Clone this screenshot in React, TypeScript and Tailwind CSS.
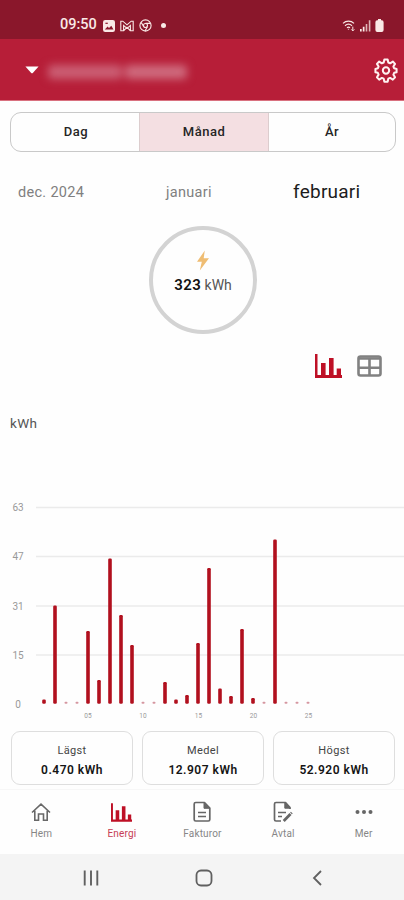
import React from "react";

const barTops: number[] = [
  700, 606, 0, 0, 631.5, 680.5, 559, 615.5, 645.5, 0, 0, 682.5, 700, 695.5, 643.5,
  568.5, 689, 696.5, 629.5, 698.5, 0, 540, 0, 0, 0,
];

const gridLines = [
  { label: "63", y: 507.5 },
  { label: "47", y: 556.5 },
  { label: "31", y: 606 },
  { label: "15", y: 655 },
];

const dayLabels = [
  { label: "05", x: 88 },
  { label: "10", x: 143 },
  { label: "15", x: 198.5 },
  { label: "20", x: 253.5 },
  { label: "25", x: 308.5 },
];

function StatusBar() {
  return (
    <div className="flex h-[39px] shrink-0 items-center bg-[#8a172b] pt-[12px] pl-[60px] pr-[20px] text-[#f9e9e6]">
      <span className="w-[38px] text-[14.5px] font-medium leading-none">09:50</span>
      <svg className="ml-[5px]" width="12" height="12" viewBox="0 0 12 12">
        <rect width="12" height="12" rx="2.2" fill="currentColor" />
        <path d="M1.8 9.6 4.6 6.6l1.4 1.3 2.3-2.2 2.2 3.9z" fill="#8a172b" />
        <path d="M2.4 3.3h2.4" stroke="#8a172b" strokeWidth="1.2" />
      </svg>
      <svg className="ml-[5px]" width="14" height="12" viewBox="0 0 14 12" fill="none" stroke="currentColor" strokeWidth="1.1">
        <path d="M.8 1.2v9.6h2.8V5.5L7 8.4l3.4-2.9v5.3h2.8V1.2h-2L7 4.8 2.8 1.2zM3.6 10.8 7 7.2l3.4 3.6" />
      </svg>
      <svg className="ml-[5px]" width="13" height="13" viewBox="0 0 13 13" fill="none" stroke="currentColor" strokeWidth="1.1">
        <circle cx="6.5" cy="6.5" r="5.6" />
        <circle cx="6.5" cy="6.5" r="2" />
        <path d="M6.5 4.4h4.8M4.6 7.5 2.2 3.4M8.3 7.7 6 11.9" />
      </svg>
      <span className="ml-[9px] size-[5px] rounded-full bg-current" />
      <div className="ml-auto flex items-center">
        <svg width="14" height="13" viewBox="0 0 14 13" fill="none" stroke="currentColor" strokeWidth="1.2">
          <path d="M1 4.4a8 8 0 0 1 11 0M3 6.7a5.3 5.3 0 0 1 7 0M5 8.8a2.4 2.4 0 0 1 3 0" />
          <path d="M6.5 9.8v.8" />
          <path d="M10.8 7.6v4.2M9.3 10.4l1.5 1.5 1.5-1.5" strokeWidth="1" />
        </svg>
        <svg className="ml-[3px]" width="13" height="13" viewBox="0 0 13 13" fill="currentColor">
          <path d="M1 10h1.7v2.5H1zM3.8 7.8h1.7v4.7H3.8z" />
          <path d="M6.7 5h1.6v7.5H6.7zM9.8 1.2h1.6v11.3H9.8z" opacity=".75" />
        </svg>
        <svg className="ml-[3px]" width="9" height="13" viewBox="0 0 9 13" fill="currentColor">
          <path d="M3 0h3v1.3h.8A1.9 1.9 0 0 1 8.6 3.2v7.9A1.9 1.9 0 0 1 6.7 13H2.3A1.9 1.9 0 0 1 .4 11.1V3.2a1.9 1.9 0 0 1 1.8-1.9H3z" />
        </svg>
      </div>
    </div>
  );
}

function Header() {
  return (
    <header className="flex h-[62px] shrink-0 items-center border-b border-[#d9717f] bg-[#b71e38] pl-[25px] pr-[6px]">
      <svg className="mt-[1px]" width="14" height="8" viewBox="0 0 14 8" fill="white">
        <path d="M.4.4h13.2L8 6.8q-1 1-2 0z" />
      </svg>
      <div className="ml-[9px] mt-[4px] flex gap-[3px] blur-[4px]">
        <span className="h-[14px] w-[74px] rounded bg-[#cb5f74]" />
        <span className="h-[14px] w-[62px] rounded bg-[#cf6b7e]" />
      </div>
      <svg className="ml-auto mt-[1px]" width="24" height="25" viewBox="0 0 24 26" fill="none" stroke="#fff2f1" strokeWidth="2.1" strokeLinejoin="round">
        <path d="M10.3 1.5h3.4l.7 3.2 1.9.8 2.8-1.8 2.3 2.4-1.7 2.8.8 1.8 2.5.7v3.4l-2.5.6-.8 1.9 1.7 2.8-2.3 2.4-2.8-1.8-1.9.8-.7 3.1h-3.4l-.7-3.1-1.9-.8-2.8 1.8-2.3-2.4 1.7-2.8-.8-1.9L1 14.8v-3.4l2.5-.7.8-1.8-1.7-2.8 2.3-2.4 2.8 1.8 1.9-.8z" />
        <circle cx="12" cy="13" r="3.3" />
      </svg>
    </header>
  );
}

function BarsIcon({ className }: { className?: string }) {
  return (
    <svg className={className} viewBox="0 0 27 24" fill="#be1026">
      <path d="M0 0h2.5v21H27v3H0z" />
      <path d="M6 9h4.6v13H6zM14 4h4.6v18H14zM21.7 14.5H26V22h-4.3z" />
    </svg>
  );
}

function Chart() {
  return (
    <svg className="block shrink-0" width="404" height="236" viewBox="0 490 404 236">
      {gridLines.map((g) => (
        <g key={g.label}>
          <path d={`M36 ${g.y}H404`} stroke="#ebebeb" strokeWidth="1.4" />
          <text x="18" y={g.y + 3.7} textAnchor="middle" fontSize="10" fill="#999">{g.label}</text>
        </g>
      ))}
      <text x="18" y="708" textAnchor="middle" fontSize="10" fill="#999">0</text>
      {barTops.map((top, i) => {
        const x = 44 + i * 11;
        return top === 0 ? (
          <rect key={i} x={x - 1.5} y="701.8" width="3" height="2" rx="1" fill="#d596a0" />
        ) : (
          <rect key={i} x={x - 1.8} y={top - 0.5} width="3.6" height={704.2 - top} rx="1.2" fill="#b1101e" />
        );
      })}
      {dayLabels.map((d) => (
        <text key={d.label} x={d.x} y="717.5" textAnchor="middle" fontSize="6.5" fill="#999">{d.label}</text>
      ))}
    </svg>
  );
}

function Stat({ label, value }: { label: string; value: string }) {
  return (
    <div className="flex h-[54px] flex-1 flex-col items-center rounded-[9px] border border-[#dedede] pt-[11px]">
      <span className="text-[11px] leading-[15px] tracking-[0.35px] text-[#444]">{label}</span>
      <span className="mt-[5px] text-[12px] font-semibold leading-[15px] tracking-[0.5px] text-[#151515]">{value}</span>
    </div>
  );
}

function DocIcon({ edit }: { edit?: boolean }) {
  return (
    <svg width="20" height="22" viewBox="0 0 20 22" fill="none" stroke="#666" strokeWidth="1.7" strokeLinejoin="round">
      {edit ? (
        <>
          <path d="M17 8V6.5L12.5 1.5H3q-1.5 0-1.5 1.5v15.5Q1.5 20 3 20h5" />
          <path d="M11.8 1.5v5.7H17z" fill="#666" strokeWidth="1" />
          <path d="M5 11.5h8M5 15.5h4" />
          <path d="m10.7 20 6.8-7" strokeWidth="2.8" />
          <path d="m18 12.4.8-.8" strokeWidth="2.6" />
        </>
      ) : (
        <>
          <path d="M12.5 1.5H3.7q-1.5 0-1.5 1.5v15.5Q2.2 20 3.7 20h12.6q1.5 0 1.5-1.5V7z" />
          <path d="M12 1.5v5.8h5.5z" fill="#666" strokeWidth="1" />
          <path d="M6 11.5h8M6 15.5h8" />
        </>
      )}
    </svg>
  );
}

function Tab({ label, active, children }: { label: string; active?: boolean; children: React.ReactNode }) {
  return (
    <div className="flex flex-1 flex-col items-center">
      <div className="flex h-[22px] items-center">{children}</div>
      <span className={`mt-[4px] text-[10px] leading-[14px] tracking-[0.15px] ${active ? "text-[#c63d55]" : "text-[#868686]"}`}>{label}</span>
    </div>
  );
}

export default function App() {
  return (
    <div className="flex h-[900px] w-[404px] flex-col overflow-hidden bg-[#fefefe] font-['Roboto',sans-serif]">
      <StatusBar />
      <Header />
      <div className="ml-[10px] mt-[11px] flex h-[40px] w-[386px] shrink-0 overflow-hidden rounded-[11px] border border-[#c9c9c9] text-[13px] font-medium tracking-[0.5px] text-[#252525]">
        <div className="flex w-[128px] items-center justify-center pl-[2px]">Dag</div>
        <div className="flex w-[130px] items-center justify-center border-x border-[#dccdce] bg-[#f4dfe2]">Månad</div>
        <div className="flex flex-1 items-center justify-center">År</div>
      </div>
      <div className="mt-[24px] flex h-[32px] shrink-0 items-center pt-px text-[14.5px] text-[#808080]">
        <span className="ml-[18px] w-[148px] tracking-[0.3px]">dec. 2024</span>
        <span className="w-[127px] tracking-[0.3px]">januari</span>
        <span className="text-[19px] tracking-[0.25px] text-[#1c1c1c]">februari</span>
      </div>
      <div className="ml-[149px] mt-[18px] flex size-[108px] shrink-0 flex-col items-center rounded-full border-4 border-[#d3d3d3] pt-[20px]">
        <svg width="14" height="21" viewBox="0 0 14 21" fill="#efbd73">
          <path d="M8.8.5 1 11.7h4.8L3.8 20.5 13 8.2H7.7z" />
        </svg>
        <div className="mt-[5px] text-[14px] leading-[18px] text-[#555]">
          <span className="text-[15px] font-semibold tracking-[0.4px] text-[#111]">323</span> kWh
        </div>
      </div>
      <div className="mt-[19px] flex h-[26px] shrink-0 items-center justify-end gap-[15px] pr-[22px]">
        <BarsIcon className="h-[24px] w-[27px]" />
        <svg width="25" height="22" viewBox="0 0 25 22" fill="none" stroke="#818181" strokeWidth="2.6">
          <rect x="1.5" y="1.5" width="22" height="19" rx="2" />
          <path d="M2 3.5h21M12.5 4v16M2 12.8h21" />
        </svg>
      </div>
      <div className="mt-[34px] h-[20px] shrink-0 pl-[10px] text-[13.5px] leading-[20px] tracking-[0.4px] text-[#555]">kWh</div>
      <div className="h-[57px] shrink-0" />
      <Chart />
      <div className="mt-[5px] flex shrink-0 gap-[9px] pl-[11px] pr-[9px]">
        <Stat label="Lägst" value="0.470 kWh" />
        <Stat label="Medel" value="12.907 kWh" />
        <Stat label="Högst" value="52.920 kWh" />
      </div>
      <nav className="mt-[4px] flex h-[65px] shrink-0 border-t border-[#f7f7f7] pl-[1px] pt-[11px]">
        <Tab label="Hem">
          <svg width="20" height="20" viewBox="0 0 20 20" fill="none" stroke="#686868" strokeWidth="1.6">
            <path d="m1 10.5 9-8.3 9 8.3M3.8 8.8v9.4h3.7V12h5v6.2h3.7V8.8" />
          </svg>
        </Tab>
        <Tab label="Energi" active><BarsIcon className="h-[19px] w-[21px]" /></Tab>
        <Tab label="Fakturor"><DocIcon /></Tab>
        <Tab label="Avtal"><DocIcon edit /></Tab>
        <Tab label="Mer">
          <svg width="18" height="6" viewBox="0 0 18 6" fill="#666">
            <circle cx="2.5" cy="3" r="2" /><circle cx="9" cy="3" r="2" /><circle cx="15.5" cy="3" r="2" />
          </svg>
        </Tab>
      </nav>
      <div className="flex min-h-0 flex-1 items-center bg-[#f4f4f4] pl-[83px] pt-px text-[#606060]">
        <svg width="16" height="16" viewBox="0 0 16 16" stroke="currentColor" strokeWidth="1.9">
          <path d="M1.7.5v15M8 .5v15M14.3.5v15" />
        </svg>
        <svg className="ml-[96px]" width="18" height="18" viewBox="0 0 18 18" fill="none" stroke="currentColor" strokeWidth="1.8">
          <rect x="1.5" y="1.5" width="15" height="15" rx="4.5" />
        </svg>
        <svg className="ml-[99px]" width="10" height="16" viewBox="0 0 10 16" fill="none" stroke="currentColor" strokeWidth="1.8">
          <path d="M9 1 2 8l7 7" />
        </svg>
      </div>
    </div>
  );
}
